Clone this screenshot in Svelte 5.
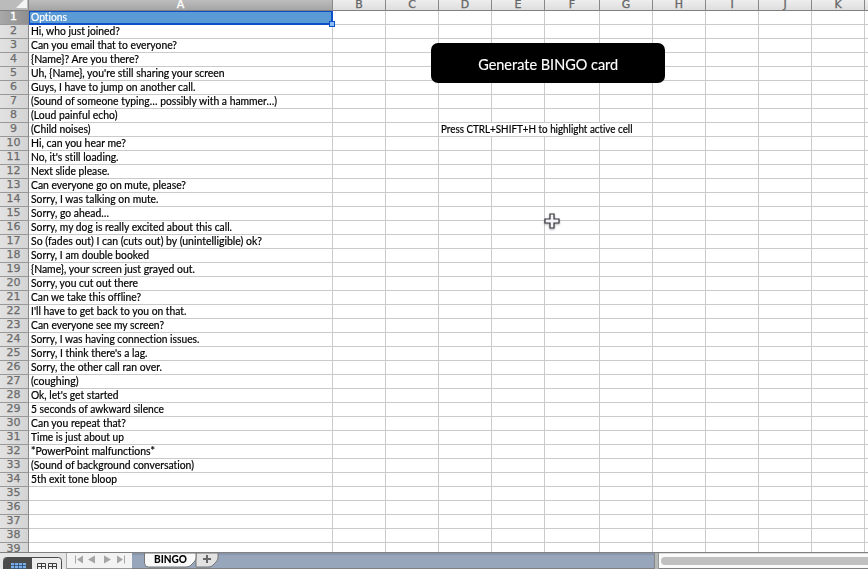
<script>
  const options = [
    ['Options', 36], ['Hi, who just joined?', 89], ['Can you email that to everyone?', 146],
    ['{Name}? Are you there?', 108], ["Uh, {Name}, you're still sharing your screen", 193.5],
    ['Guys, I have to jump on another call.', 164.5],
    ['(Sound of someone typing… possibly with a hammer…)', 246],
    ['(Loud painful echo)', 86.5], ['(Child noises)', 59.5], ['Hi, can you hear me?', 95],
    ["No, it's still loading.", 87.5], ['Next slide please.', 78.5],
    ['Can everyone go on mute, please?', 155], ['Sorry, I was talking on mute.', 127.5],
    ['Sorry, go ahead…', 78], ['Sorry, my dog is really excited about this call.', 201],
    ['So (fades out) I can (cuts out) by (unintelligible) ok?', 231],
    ['Sorry, I am double booked', 118], ['{Name}, your screen just grayed out.', 164],
    ['Sorry, you cut out there', 107], ['Can we take this offline?', 110],
    ["I'll have to get back to you on that.", 155.5], ['Can everyone see my screen?', 133],
    ['Sorry, I was having connection issues.', 168.5], ["Sorry, I think there's a lag.", 116.5],
    ['Sorry, the other call ran over.', 131], ['(coughing)', 47.5], ["Ok, let's get started", 87.5],
    ['5 seconds of awkward silence', 133], ['Can you repeat that?', 95],
    ['Time is just about up', 93], ['*PowerPoint malfunctions*', 124],
    ['(Sound of background conversation)', 163], ['5th exit tone bloop', 86]
  ];
  const columns = [['A', 304], ['B', 53], ['C', 53], ['D', 53], ['E', 53], ['F', 55], ['G', 53], ['H', 53], ['I', 53], ['J', 53], ['K', 53], ['', 4]];
  const rows = Array.from({ length: 39 }, (_, i) => i + 1);

  // Condenses or widens a label so that it takes the given width.
  function fit(node, width) {
    const natural = node.getBoundingClientRect().width;
    if (natural) node.style.transform = `scaleX(${width / natural})`;
  }
</script>

<div class="app">
  <div class="heads">
    <div class="corner"><svg width="28" height="10"><path d="M27 0v8H16l8-8z" fill="#f4f4f4" /></svg></div>
    {#each columns as [name, width]}
      <div class="col" class:active={name === 'A'} style:width="{width}px"><span>{name}</span></div>
    {/each}
  </div>
  <div class="sheet">
    {#each rows as row}
      <div class="row">
        <div class="num" class:active={row === 1}>{row}</div>
        {#each columns as [name, width]}
          <div class="cell" class:selected={row === 1 && name === 'A'} style:width="{width}px">
            {#if name === 'A' && options[row - 1]}
              <span class="label" use:fit={options[row - 1][1]}>{options[row - 1][0]}</span>
            {:else if name === 'D' && row === 9}
              <span class="label over" use:fit={191.5}>Press CTRL+SHIFT+H to highlight active cell</span>
            {/if}
          </div>
        {/each}
      </div>
    {/each}
    <i class="handle"></i>
    <button><span use:fit={140}>Generate BINGO card</span></button>
    <svg class="cursor" width="18" height="18" viewBox="0 0 18 18">
      <path d="M7 2h4v5h5v4h-5v5H7v-5H2V7h5z" fill="#f4f4f6" stroke="#34343c" stroke-width="1.2" />
    </svg>
  </div>
  <div class="footer">
    <div class="views">
      <svg width="66" height="16">
        <rect x="3.5" y="4.5" width="58" height="18" rx="3" fill="#ededed" stroke="#4b4b4b" />
        <path d="M4 16V7q0-2 2-2h26v11z" fill="#4b4b4b" />
        <rect x="11" y="10" width="15" height="8" fill="#79aee8" />
        <path d="M11 12.5h15M11 15.5h15M14.5 10v6M18.5 10v6M22.5 10v6" stroke="#29415c" stroke-width=".7" />
        <path d="M37.5 17v-6.500h8V17M48.500 17v-6.500h8V17M37 13.500h9M48 13.500h9M41.500 10v6M52.500 10v6" fill="none" stroke="#3e3e3e" />
      </svg>
    </div>
    <div class="nav">
      <svg width="65" height="14" fill="#a6a6a6">
        <path d="M8 2.500h1v8H8zM16 2.500v8l-6-4zM28 2.500v8l-7-4zM37 2.500v8l7-4zM50 2.500v8l6-4zM57 2.500h1v8h-1z" />
      </svg>
    </div>
    <div class="tabs">
      <svg width="80" height="16" overflow="visible">
        <path d="M51 0h22v5q0 2-2 4l-4 4q-2 1-4 1H51z" fill="#e2e2e2" stroke="#777" />
        <path d="M-.5 0H51v5q0 2-2 4l-4 4q-2 1-4 1H3.500q-4 0-4-4z" fill="#f9f9f9" stroke="#777" />
        <path d="M62 2v8M58 6h8" stroke="#666" stroke-width="2" />
      </svg>
      <span class="tab" use:fit={33}>BINGO</span>
    </div>
    <div class="grip"></div>
    <div class="track"><div class="thumb"></div></div>
  </div>
</div>

<style>
  :global(body) { margin: 0; overflow: hidden; }
  .app { width: 868px; height: 569px; overflow: hidden; background: #fff; display: flex; flex-direction: column; }
  .heads { height: 11px; flex: none; display: flex; font: 11px/11px "DejaVu Sans", sans-serif; color: #666; overflow: hidden; }
  .heads > div { box-sizing: border-box; flex: none; height: 11px; border-right: 1px solid #888; border-bottom: 1px solid #808080; }
  .corner { width: 29px; background: #bbb; }
  .col { background: linear-gradient(#eee, #dedede); text-align: center; }
  .col span { display: block; margin-top: -1px; -webkit-text-stroke: .3px; }
  .col.active { background: linear-gradient(#bdbdbd, #a5a5a5); color: #fff; }
  .sheet { position: relative; height: 541px; flex: none; overflow: hidden; }
  .row { display: flex; height: 14px; }
  .num { box-sizing: border-box; width: 29px; flex: none; padding-right: 1px; text-align: center; font: 11px/12px "DejaVu Sans", sans-serif; color: #6c6c6c; -webkit-text-stroke: .25px; background: linear-gradient(90deg, #e2e2e2, #d4d4d4); border-right: 1px solid #888; border-bottom: 1px solid #999; }
  .num.active { background: linear-gradient(90deg, #a8a8a8, #8f8f8f); color: #fff; -webkit-text-stroke: .4px; }
  .cell { box-sizing: border-box; flex: none; padding-left: 2px; border-right: 1px solid #cacaca; border-bottom: 1px solid #cacaca; white-space: nowrap; font: 10.5px/13px Lato, sans-serif; color: #000; }
  .cell.selected { background: #5b9bd5; color: #fff; box-shadow: inset 0 1px #0b50c8, inset 1px 0 #0b50c8, inset -1px -1px #0b50c8; border-color: #0b50c8; }
  .label { display: inline-block; transform-origin: left; -webkit-text-stroke: .2px; font-variant-ligatures: none; }
  .over { background: #fff; }
  .handle { position: absolute; left: 329px; top: 10px; width: 4px; height: 4px; border: 1px solid #0b50c8; background: #8abcf5; }
  button { position: absolute; left: 431px; top: 32px; width: 234px; height: 40px; padding: 4px 0 0; border: 0; border-radius: 7px; background: #000; color: #fff; font: 14.5px/18px Lato, sans-serif; white-space: nowrap; }
  button span { display: inline-block; -webkit-text-stroke: .15px; }
  .cursor { position: absolute; left: 543px; top: 201px; filter: drop-shadow(0 1px 1px #0005); }
  .footer { box-sizing: border-box; height: 17px; flex: none; display: flex; border-top: 1px solid #808080; background: #98a6bb; overflow: hidden; }
  .views { width: 66px; flex: none; background: #e6e6e6; }
  svg { display: block; }
  .nav { box-sizing: border-box; width: 66px; flex: none; background: #f3f3f3; border-bottom: 1px solid #999; border-left: 1px solid #aaa; }
  .tabs { box-sizing: border-box; flex: 1; padding-left: 13px; position: relative; border-bottom: 1px solid #808080; box-shadow: inset 0 2px 1px #7a879b88; }
  .tab { position: absolute; left: 22px; top: -1px; font: 900 10.5px/14px Lato, sans-serif; transform-origin: left; }
  .grip { width: 5px; flex: none; box-sizing: border-box; background: #b5bab8; border-left: 1px solid #888; border-right: 1px solid #999; }
  .track { box-sizing: border-box; width: 209px; flex: none; padding: 3px 0 0 2px; background: #fafafa; border-top: 1px solid #ddd; border-bottom: 1px solid #808080; }
  .thumb { height: 8px; background: #c0c0c0; border-radius: 4px 0 0 4px; }
</style>
